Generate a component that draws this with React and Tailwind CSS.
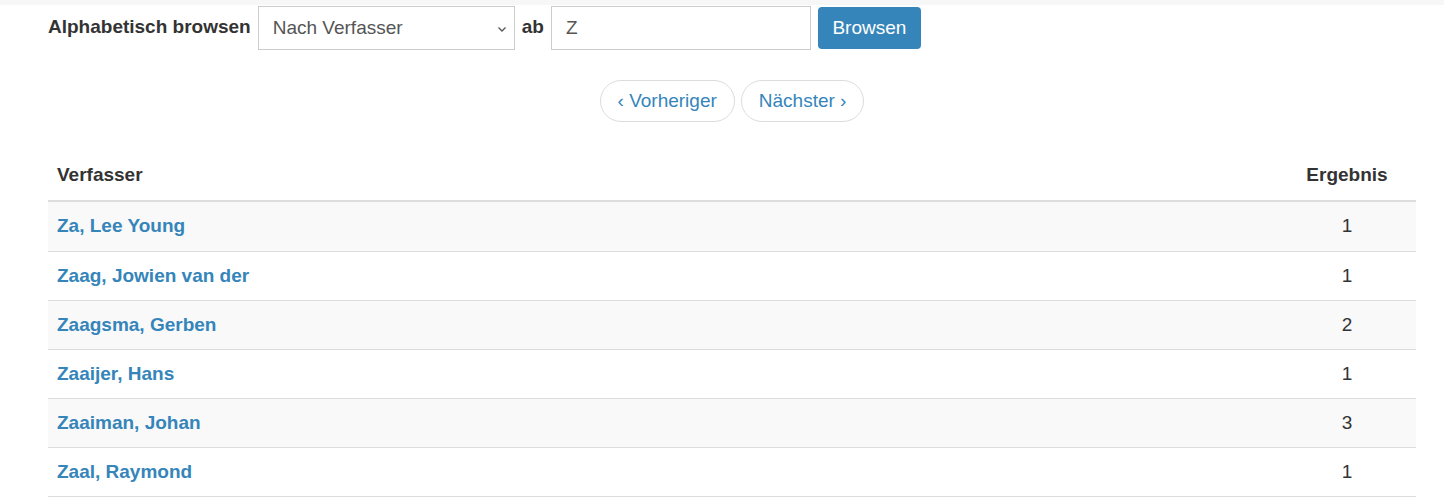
import React from "react";

const rows = [
  ["Za, Lee Young", 1],
  ["Zaag, Jowien van der", 1],
  ["Zaagsma, Gerben", 2],
  ["Zaaijer, Hans", 1],
  ["Zaaiman, Johan", 3],
  ["Zaal, Raymond", 1],
];

export default function App() {
  return (
    <div className="min-h-[500px] bg-white text-[#333] text-[19px]" style={{ fontFamily: '"Liberation Sans", Arial, sans-serif' }}>
      <div className="h-[5px] bg-[#f7f7f7]" />
      <div className="pl-[48px] pr-[28px]">
        <div className="flex items-start pt-[1px]">
          <div className="font-bold leading-[26px] pt-[8px] text-[#333]">Alphabetisch browsen</div>
          <div className="ml-[7px] w-[257px] h-[44px] border border-[#ccc] flex items-center justify-between pl-[14px] pr-[6px] text-[#555] bg-white">
            <span>Nach Verfasser</span>
            <svg width="12" height="12" viewBox="0 0 12 12" className="mt-[1px]">
              <path d="M2.5 4.5 L6 8 L9.5 4.5" fill="none" stroke="#555" strokeWidth="1.3" />
            </svg>
          </div>
          <div className="ml-[7px] font-bold leading-[26px] pt-[8px]">ab</div>
          <div className="ml-[7px] w-[260px] h-[44px] border border-[#ccc] flex items-center pl-[14px] text-[#555] bg-white">Z</div>
          <button className="ml-[7px] mt-[1px] w-[103px] h-[42px] rounded-[4px] bg-[#3585ba] text-white flex items-center justify-center">Browsen</button>
        </div>
        <div className="flex justify-center gap-[6px] mt-[30px]">
          <button className="h-[42px] px-[17px] rounded-full border border-[#ddd] bg-white text-[#3585ba] flex items-center">‹ Vorheriger</button>
          <button className="h-[42px] px-[17px] rounded-full border border-[#ddd] bg-white text-[#3585ba] flex items-center">Nächster ›</button>
        </div>
        <div className="mt-[28px]">
          <div className="flex h-[52px] items-center border-b-2 border-[#ddd] font-bold">
            <div className="flex-1 pl-[9px]">Verfasser</div>
            <div className="w-[138px] text-center">Ergebnis</div>
          </div>
          {rows.map(([name, n], i) => (
            <div
              key={name}
              className={
                "flex h-[49px] items-center " +
                (i > 0 ? "border-t border-[#ddd] " : "") +
                (i % 2 === 0 ? "bg-[#f9f9f9]" : "bg-white")
              }
            >
              <div className="flex-1 pl-[9px] font-bold text-[#3585ba]">{name}</div>
              <div className="w-[138px] text-center">{n}</div>
            </div>
          ))}
          <div className="border-t border-[#ddd]" />
        </div>
      </div>
    </div>
  );
}
